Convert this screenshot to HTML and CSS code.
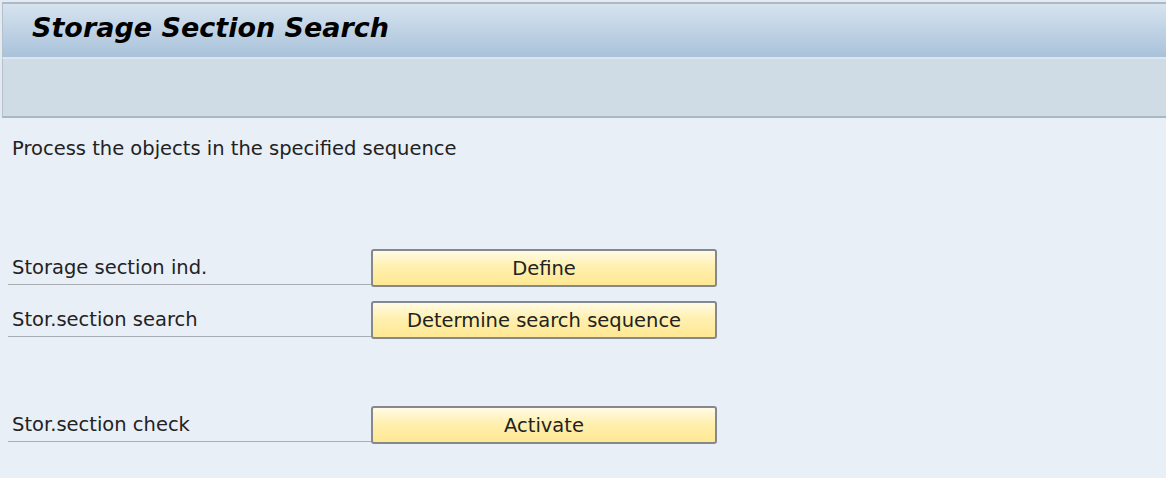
FILE: index.html
```html
<!DOCTYPE html>
<html lang="en">
<head>
  <meta charset="UTF-8"/>
  <title>Storage Section Search</title>
  <link rel="stylesheet" href="styles.css">
</head>
<body>
  <header class="screen-head">
    <div class="title-bar">
      <h1>Storage Section Search</h1>
    </div>
    <div class="tool-bar"></div>
  </header>

  <main class="content">
    <p class="hint">Process the objects in the specified sequence</p>

    <div class="step step-first">
      <span class="step-label">Storage section ind.</span>
      <button class="step-button">Define</button>
    </div>
    <div class="step step-second">
      <span class="step-label">Stor.section search</span>
      <button class="step-button">Determine search sequence</button>
    </div>
    <div class="step step-third">
      <span class="step-label">Stor.section check</span>
      <button class="step-button">Activate</button>
    </div>
  </main>
</body>
</html>
```

FILE: styles.css
```css
body {
  margin: 0;
  background: #e9eff7;
  font-family: "DejaVu Sans", sans-serif;
  color: #222;
}

.screen-head { padding: 2px 0 0 2px; background: #e4eaf1; }
.title-bar {
  height: 47px; padding-bottom: 6px;
  border-top: 2px solid #aeb9c6;
  border-left: 1px solid #b4c0cc;
  border-bottom: 2px solid #dce6f0;
  background: linear-gradient(#d6e3ef, #a9c2da);
}
.title-bar h1 {
  margin: 0; padding-left: 29px;
  font: italic bold 27px/47px "DejaVu Sans", sans-serif;
  color: #000;
}
.tool-bar {
  height: 57px;
  border-left: 1px solid #b4c0cc;
  border-bottom: 2px solid #a9b7c4;
  background: #cfdce6;
}

.content { padding: 19px 0 0 8px; font-size: 19.5px; }
.hint { margin: 0 0 0 4px; line-height: 24px; }

.step { display: flex; align-items: flex-start; }
.step-first { margin-top: 88px; }
.step-second { margin-top: 14px; }
.step-third { margin-top: 67px; }

.step-label {
  width: 359px; height: 33px;
  padding: 2px 0 0 4px;
  line-height: 33px;
  border-bottom: 1px solid #a9adb3;
}
.step-button {
  width: 346px; height: 38px;
  padding: 0; margin: 0;
  font: 19.5px "DejaVu Sans", sans-serif;
  color: #222;
  border: 2px solid #85888c;
  border-radius: 3px;
  background: linear-gradient(#fffbe6, #fff0b0 45%, #ffe892);
  cursor: pointer;
}
.step-button:hover { background: linear-gradient(#fffdf0, #ffe99c); }
```
